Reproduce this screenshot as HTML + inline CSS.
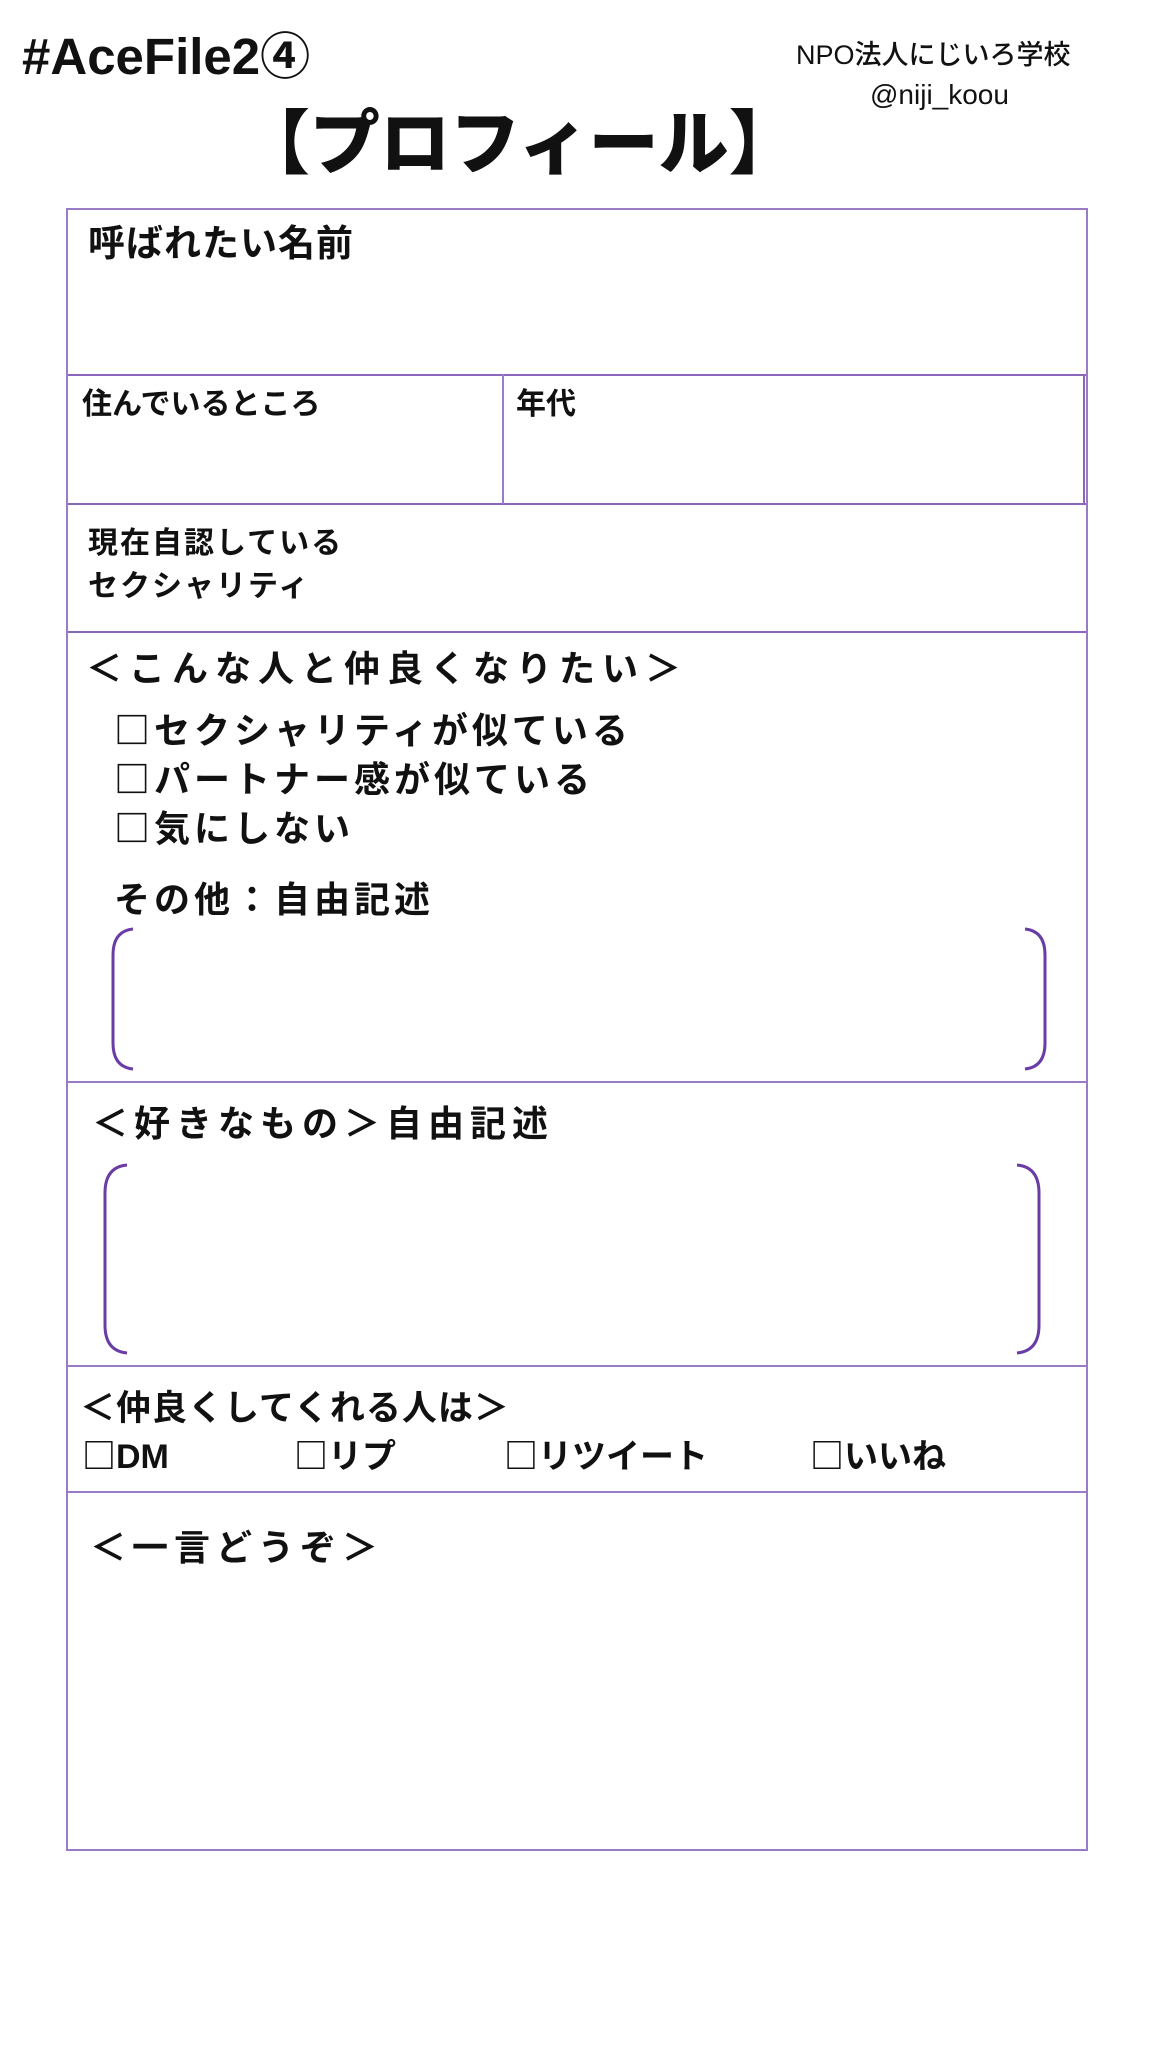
<!DOCTYPE html>
<html><head><meta charset="utf-8">
<style>
html,body{margin:0;padding:0;background:#fff;}
body{width:1158px;height:2048px;position:relative;overflow:hidden;font-family:"Noto Sans CJK JP","Liberation Sans",sans-serif;color:#111;}
.t{position:absolute;line-height:1;white-space:nowrap;font-weight:700;}
.h{position:absolute;height:2px;background:#9a7cc6;}
.v{position:absolute;width:2px;background:#9a7cc6;}
.l{font-family:"Liberation Sans","Noto Sans CJK JP",sans-serif;}
</style></head><body>
<div class="t l" style="left:22px;top:28px;font-size:51px;">#AceFile2<span style="font-family:'Noto Sans CJK JP',sans-serif;font-size:50px;">④</span></div>
<div class="t l" style="left:796px;top:42px;font-size:27px;font-weight:500;">NPO法人にじいろ学校</div>
<div class="t l" style="left:870px;top:81px;font-size:28px;font-weight:500;">@niji_koou</div>
<div class="t" style="left:240px;top:104px;font-size:70px;font-weight:900;letter-spacing:0px;">【プロフィール】</div>

<div class="h" style="left:67px;width:1021px;top:208px;"></div>
<div class="h" style="left:67px;width:1021px;top:374px;background:#8a66bd;"></div>
<div class="h" style="left:67px;width:1021px;top:503px;background:#8a66bd;"></div>
<div class="h" style="left:67px;width:1021px;top:631px;background:#8a66bd;"></div>
<div class="h" style="left:67px;width:1021px;top:1081px;"></div>
<div class="h" style="left:67px;width:1021px;top:1365px;"></div>
<div class="h" style="left:67px;width:1021px;top:1491px;"></div>
<div class="h" style="left:67px;width:1021px;top:1849px;"></div>
<div class="v" style="left:66px;top:208px;height:1643px;"></div>
<div class="v" style="left:1086px;top:208px;height:1643px;"></div>
<div class="v" style="left:502px;top:374px;height:130px;"></div>
<div class="v" style="left:1083px;top:374px;height:130px;background:#8a66bd;"></div>

<div class="t" style="left:88px;top:222px;font-size:37px;letter-spacing:1px;">呼ばれたい名前</div>
<div class="t" style="left:82px;top:386px;font-size:30px;">住んでいるところ</div>
<div class="t" style="left:516px;top:386px;font-size:30px;">年代</div>
<div class="t" style="left:88px;top:525px;font-size:30px;letter-spacing:2px;">現在自認している</div>
<div class="t" style="left:88px;top:568px;font-size:30px;letter-spacing:2px;">セクシャリティ</div>

<div class="t" style="left:86px;top:648px;font-size:36px;letter-spacing:7px;">＜こんな人と仲良くなりたい＞</div>
<div class="t" style="left:114px;top:710px;font-size:36px;letter-spacing:4px;">□セクシャリティが似ている</div>
<div class="t" style="left:114px;top:759px;font-size:36px;letter-spacing:4px;">□パートナー感が似ている</div>
<div class="t" style="left:114px;top:808px;font-size:36px;letter-spacing:4px;">□気にしない</div>
<div class="t" style="left:114px;top:879px;font-size:36px;letter-spacing:4px;">その他：自由記述</div>

<svg style="position:absolute;left:0;top:0" width="1158" height="2048">
<g fill="none" stroke="#6a3ca6" stroke-width="3">
<path d="M133 929 Q113 931 113 955 L113 1043 Q113 1067 133 1069"/>
<path d="M1025 929 Q1045 931 1045 955 L1045 1043 Q1045 1067 1025 1069"/>
<path d="M127 1165 Q105 1167 105 1193 L105 1325 Q105 1351 127 1353"/>
<path d="M1017 1165 Q1039 1167 1039 1193 L1039 1325 Q1039 1351 1017 1353"/>
</g></svg>

<div class="t" style="left:92px;top:1103px;font-size:36px;letter-spacing:6px;">＜好きなもの＞自由記述</div>
<div class="t" style="left:80px;top:1388px;font-size:35px;letter-spacing:1px;">＜仲良くしてくれる人は＞</div>
<div class="t" style="left:82px;top:1437px;font-size:34px;">□<span class="l">DM</span></div>
<div class="t" style="left:294px;top:1437px;font-size:34px;">□リプ</div>
<div class="t" style="left:504px;top:1437px;font-size:34px;">□リツイート</div>
<div class="t" style="left:810px;top:1437px;font-size:34px;">□いいね</div>
<div class="t" style="left:90px;top:1527px;font-size:36px;letter-spacing:6px;">＜一言どうぞ＞</div>
</body></html>
